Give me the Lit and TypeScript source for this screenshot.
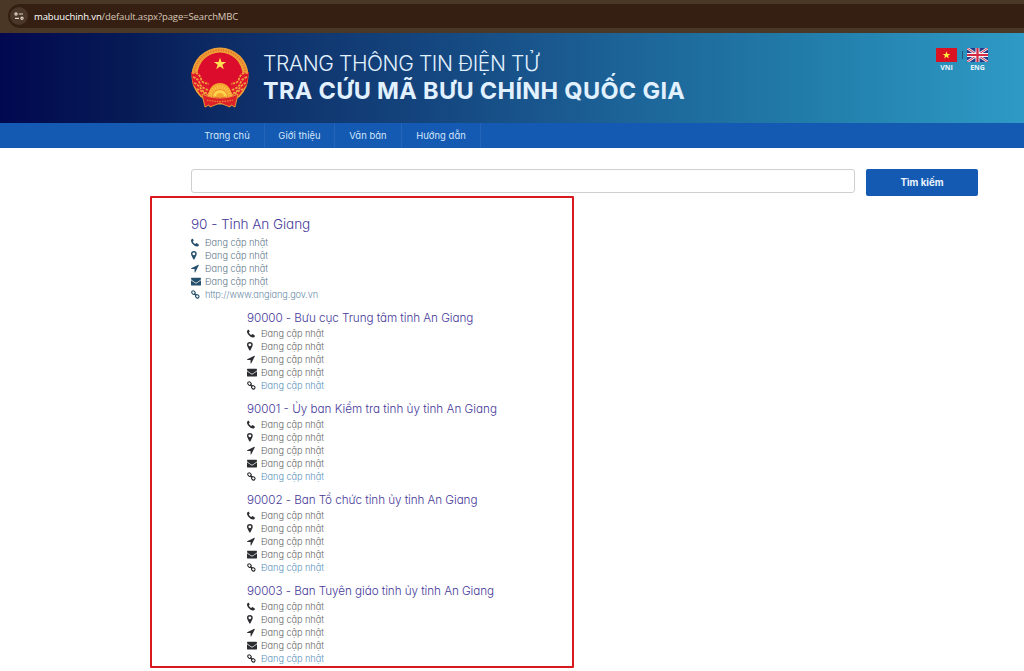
import { LitElement, html, svg, css } from "lit";
import { customElement, property } from "lit/decorators.js";

const PATHS: Record<string, unknown> = {
  phone: svg`<path transform="translate(0 1)" d="M11 8.7c0 .3-.2 1-.3 1.200-.2.500-1.300 1.100-2 1.100C6 11 3.600 9 2.300 7.500 1 6 0 4.300 0 2.500 0 1.700.6.500 1.100.3 1.400.1 2 0 2.400 0c.3.100 1.300 2.200 1.400 2.500 0 .5-1.200 1.200-1.200 1.600 0 .6 2.600 3.300 3.400 3.300.4 0 1.100-1.300 1.600-1.300C7.900 6.200 11 8 11 8.700z"/>`,
  pin: svg`<path fill-rule="evenodd" d="M4 0a4 4 0 0 1 4 4c0 .6-.1 1.100-.3 1.600L4.800 11.500c-.3.600-1.300.6-1.600 0L.3 5.600C.1 5.100 0 4.600 0 4a4 4 0 0 1 4-4zm0 2a2 2 0 1 0 0 4 2 2 0 0 0 0-4z"/>`,
  arrow: svg`<path d="M11 1.700 6 11.700c-.2.400-1 .3-1-.2V7H.5C0 7-.1 6.300.3 6.100l10-5c.4-.2.900.2.700.6z"/>`,
  mail: svg`<path d="M0 4.500c2 1.500 4 2.900 5 3.600.7.500 1.200.9 2 .9s1.300-.4 2-.9c1-.7 3-2.100 5-3.600v6.200c0 .7-.6 1.300-1.300 1.300H1.300C.6 12 0 11.400 0 10.700zM0 2.500C0 1.700.5 1 1.300 1h11.400c.7 0 1.300.6 1.300 1.300 0 .9-.7 1.700-1.400 2.200L8.700 7.200C8.200 7.500 7.500 8 7 8s-1.200-.5-1.700-.8L1.500 4.500C.9 4.100 0 3.200 0 2.500z"/>`,
  link: svg`<g fill="none" stroke="currentColor" stroke-width="1.500"><rect x="-2.600" y="-2" width="5.200" height="4" rx="1.700" transform="translate(3.500 3.600) rotate(45)"/><rect x="-2.600" y="-2" width="5.200" height="4" rx="1.700" transform="translate(8.700 8.800) rotate(45)"/><path d="M4.600 4.700l3 3"/></g>`,
};

@customElement("contact-icon")
class ContactIcon extends LitElement {
  @property() name = "phone";
  static styles = css`
    :host { display: block; width: 14px; height: 9px; }
    svg { display: block; width: 10px; height: 9px; fill: currentColor; overflow: visible; }
  `;
  render() {
    return html`<svg viewBox="0 0 14 12.600" preserveAspectRatio="xMinYMid meet">${PATHS[this.name]}</svg>`;
  }
}

@customElement("postal-entry")
class PostalEntry extends LitElement {
  @property() heading = "";
  @property() site = "";
  @property({ type: Boolean, reflect: true }) province = false;
  static styles = css`
    :host { display: block; height: 91px; color: #2c2d30; }
    h3 { margin: 0; height: 18.500px; font-size: 11.700px; line-height: 20px; font-weight: 300; color: #46399a; white-space: nowrap; letter-spacing: var(--heading-spacing, 0px); }
    ul { list-style: none; margin: 0; padding: 0; }
    li { display: flex; align-items: center; height: 13.100px; font-size: 9.200px; line-height: 13px; white-space: nowrap; }
    span { color: #686868; font-weight: 300; letter-spacing: -0.050px; }
    .site { color: #5c93bb; }
    :host([province]) { height: 93px; color: #25506d; }
    :host([province]) h3 { font-size: 13.600px; height: 22.700px; line-height: 22px; letter-spacing: -0.080px; }
    :host([province]) span { color: #64798a; }
    :host([province]) .site { color: #6b8da9; letter-spacing: -0.110px; }
  `;
  render() {
    const names = ["phone", "pin", "arrow", "mail", "link"];
    return html`<h3>${this.heading}</h3>
      <ul>${names.map((n) => html`<li><contact-icon name=${n}></contact-icon><span class=${n === "link" ? "site" : "text"}>${n === "link" && this.site ? this.site : "Đang cập nhật"}</span></li>`)}</ul>`;
  }
}

@customElement("national-emblem")
class NationalEmblem extends LitElement {
  static styles = css`:host, svg { display: block; width: 60px; height: 62px; }`;
  render() {
    const rays = Array.from({ length: 13 }, (_, i) => svg`<path d="M30 50V38" transform=${`rotate(${-84 + i * 14} 30 50)`} />`);
    return html`<svg viewBox="0 0 60 62">
      <circle cx="30" cy="29" r="28.500" fill="#eda035"/>
      <circle cx="30" cy="29" r="26" fill="none" stroke="#e6702c" stroke-width="2" stroke-dasharray="1.200 1.400"/>
      <circle cx="30" cy="28" r="22.500" fill="#dc0d2c"/>
      <path d="M1 25l8 1 3 6 8 3-1 12 11 4 11-4-1-12 8-3 3-6 8-1-2 12-8 11-5 4H16l-5-4-8-11z" fill="#e0182c"/>
      <g fill="none" stroke="#efa53d" stroke-width="1.700" stroke-dasharray="2.500 1.100">
        <path d="M2 26c5-1 8 2 9 6s4 4 8 5M3 30c4 1 6 4 7 7s5 5 8 6M4 36c4 1 6 5 8 7s4 3 7 4M7 42c4 1 7 5 11 6"/>
        <path d="M58 26c-5-1-8 2-9 6s-4 4-8 5M57 30c-4 1-6 4-7 7s-5 5-8 6M56 36c-4 1-6 5-8 7s-4 3-7 4M53 42c-4 1-7 5-11 6"/>
      </g>
      <path d="M30 10.500l1.450 4.450h4.700l-3.800 2.750 1.450 4.450L30 19.400l-3.800 2.750 1.450-4.450-3.800-2.750h4.700z" fill="#ffe052"/>
      <path d="M18 50c0-8 5-14 12-14s12 6 12 14z" fill="#f4a32f"/>
      <g stroke="#ffcf50" stroke-width=".8">${rays}</g>
      <path d="M22.500 50a7.500 7.500 0 0 1 15 0z" fill="#ffd64b" stroke="#ee8a2d"/>
      <path d="M26 50a4 4 0 0 1 8 0z" fill="#f4a32f"/>
      <path d="M12 47c6 3 12 4 18 4s12-1 18-4l-3 13-4-2-1 2-10-4-10 4-1-2-4 2z" fill="#dc2228" stroke="#e8923b"/>
      <path d="M17 53c8 2 18 2 26 0" fill="none" stroke="#ee8434" stroke-width="1.200" stroke-dasharray="1.500 1"/>
    </svg>`;
  }
}

@customElement("app-root")
class AppRoot extends LitElement {
  static styles = css`
    :host { display: block; height: 671px; overflow: hidden; background: #fff; font-family: Inter, "Open Sans", sans-serif; font-feature-settings: "cv11" 1, "ss03" 1; }
    * { box-sizing: border-box; }
    .browser { height: 33px; padding: 4px 0 5px 8px; background: #4a3725; }
    .address { display: flex; align-items: center; gap: 7px; height: 24px; border-radius: 12px 0 0 12px; background: #341f12; font: 9.500px "Open Sans", sans-serif; color: #d9c8b9; padding-left: 2px; }
    .controls { display: block; width: 18px; height: 18px; border-radius: 50%; background: #4a3729; }
    .url { white-space: nowrap; letter-spacing: -0.110px; margin-left: -1px; }
    .url b { font-weight: 400; color: #fff; }
    .banner { display: flex; height: 90px; padding: 14px 0 0 190px; background: linear-gradient(90deg, #020850 0%, #061a55 12%, #0d2c66 22%, #154780 43%, #1c6297 60%, #217ba9 78%, #2e9ac5 100%); }
    .titles { width: 686px; padding-left: 13px; color: #e2f1ff; white-space: nowrap; }
    .line1 { font-size: 21px; line-height: 28px; font-weight: 300; margin-top: 3px; letter-spacing: -0.390px; }
    .line2 { font-size: 23.500px; line-height: 26px; font-weight: 700; letter-spacing: 0.320px; }
    .langs { display: flex; font: 700 7px/8px "Open Sans", sans-serif; color: #e8f5fb; text-align: center; }
    .lang svg { display: block; width: 21px; height: 14px; margin: 1px 0 2px; }
    .lang { width: 21px; }
    .bar { width: 1px; height: 8px; background: #245272; margin: 4px 4px 0 5px; }
    nav { display: flex; height: 25px; padding-left: 190px; background: #145ab3; color: #d2e6fb; }
    nav a { border-right: 1px solid #2465ba; text-align: center; font-size: 9.400px; line-height: 25px; font-weight: 400; letter-spacing: 0.070px; white-space: nowrap; }
    .w0 { width: 75px; } .w1 { width: 70px; } .w2 { width: 67px; } .w3 { width: 79px; }
    .search { display: flex; gap: 11px; padding: 21px 0 0 191px; height: 48px; }
    .field { width: 664px; height: 24px; border: 1px solid #cdcfd1; border-radius: 3px; background: #fff; }
    .submit { width: 112px; height: 27px; border: 0; border-radius: 2px; background: #145ab3; color: #e9f3ff; font: 700 9.700px Inter, sans-serif; font-feature-settings: inherit; padding: 0; }
    .results { width: 424px; height: 472px; margin-left: 150px; padding: 15px 0 0 39px; border: 2px solid #d8191e; border-radius: 1px; }
    .children { padding-left: 56px; padding-top: 2px; }
    .e0 { --heading-spacing: -0.060px; }
    .e1 { --heading-spacing: 0px; }
    .e2 { --heading-spacing: -0.070px; }
    .e3 { --heading-spacing: -0.060px; }
  `;
  render() {
    const entries = [
      "90000 - Bưu cục Trung tâm tỉnh An Giang",
      "90001 - Ủy ban Kiểm tra tỉnh ủy tỉnh An Giang",
      "90002 - Ban Tổ chức tỉnh ủy tỉnh An Giang",
      "90003 - Ban Tuyên giáo tỉnh ủy tỉnh An Giang",
    ];
    return html`
      <div class="browser"><div class="address">
        <svg class="controls" viewBox="0 0 18 18" fill="none" stroke="#e4d8cd" stroke-width="1.200"><circle cx="6" cy="7" r="1.100"/><path d="M8.800 7H13M5 11.300h4"/><circle cx="12" cy="11.300" r="1.100"/></svg>
        <span class="url"><b>mabuuchinh.vn</b>/default.aspx?page=SearchMBC</span>
      </div></div>
      <header class="banner">
        <national-emblem></national-emblem>
        <div class="titles"><div class="line1">TRANG THÔNG TIN ĐIỆN TỬ</div><div class="line2">TRA CỨU MÃ BƯU CHÍNH QUỐC GIA</div></div>
        <div class="langs">
          <div class="lang"><svg viewBox="0 0 21 14"><path fill="#d91322" d="M0 0h21v14H0z"/><path fill="#ffee3d" d="M10.500 3.200l.95 2.700h2.850L12 7.650l.85 2.750-2.350-1.650L8.150 10.400 9 7.650 6.700 5.900h2.850z"/></svg>VNI</div>
          <i class="bar"></i>
          <div class="lang"><svg viewBox="0 0 21 14"><path fill="#283c86" d="M0 0h21v14H0z"/><path stroke="#edeff8" stroke-width="2.600" d="M0 0l21 14M21 0L0 14"/><path stroke="#d03048" stroke-width="1" d="M0 0l21 14M21 0L0 14"/><path stroke="#f5f4f8" stroke-width="4" d="M10.500 0v14M0 7h21"/><path stroke="#d32b43" stroke-width="2.200" d="M10.500 0v14M0 7h21"/></svg>ENG</div>
        </div>
      </header>
      <nav>${["Trang chủ", "Giới thiệu", "Văn bản", "Hướng dẫn"].map((t, i) => html`<a class="w${i}">${t}</a>`)}</nav>
      <div class="search"><input class="field" type="text" /><button class="submit">Tìm kiếm</button></div>
      <main class="results">
        <postal-entry province heading="90 - Tỉnh An Giang" site="http://www.angiang.gov.vn"></postal-entry>
        <div class="children">${entries.map((h, i) => html`<postal-entry class="e${i}" heading=${h}></postal-entry>`)}</div>
      </main>`;
  }
}
